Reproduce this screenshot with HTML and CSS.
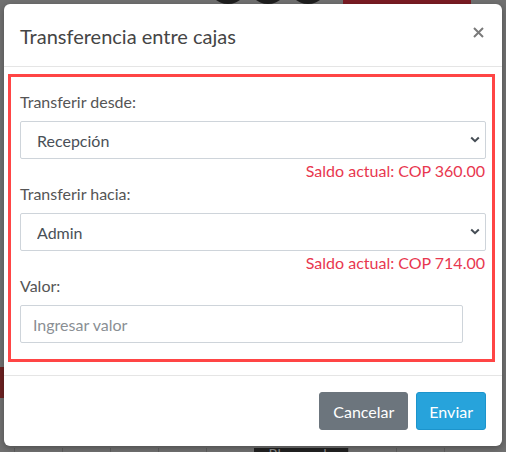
FILE: index.html
```html
<!DOCTYPE html>
<html lang="es">
<head>
    <meta charset="UTF-8">
    <meta name="viewport" content="width=device-width, initial-scale=1.0">
    <title>Transferencia entre cajas</title>
    <link rel="stylesheet" href="styles.css">
</head>
<body>

<!-- Page behind the modal (dimmed) -->
<div class="page">
    <div class="topbar">
        <span class="avatar"></span>
        <span class="avatar"></span>
        <span class="avatar"></span>
        <span class="red-btn"></span>
    </div>
    <div class="side-block"></div>
    <div class="grid-row">
        <span class="cell"></span>
        <span class="cell"></span>
        <span class="cell"></span>
        <span class="cell"></span>
        <span class="cell"></span>
        <span class="cell locked">Bloqueada</span>
        <span class="cell"></span>
        <span class="cell"></span>
        <span class="cell"></span>
    </div>
</div>

<!-- Modal -->
<div class="modal">
    <div class="modal-header">
        <h2 class="modal-title">Transferencia entre cajas</h2>
        <button class="close-btn" aria-label="Cerrar">
            <svg width="11" height="11" viewBox="0 0 11 11">
                <path d="M1 1 L10 10 M10 1 L1 10" stroke="#7a7a7a" stroke-width="2" fill="none"/>
            </svg>
        </button>
    </div>

    <div class="modal-body">
        <form class="transfer-form">
            <label class="field-label" for="desde">Transferir desde:</label>
            <div class="select-wrap">
                <select id="desde" class="field">
                    <option>Recepción</option>
                    <option>Admin</option>
                </select>
                <svg class="chevron" width="10" height="7" viewBox="0 0 10 7">
                    <path d="M1.2 1.5 L5 5.2 L8.8 1.5" stroke="#454d55" stroke-width="2" fill="none"/>
                </svg>
            </div>
            <div class="saldo">Saldo actual: COP 360.00</div>

            <label class="field-label label-gap" for="hacia">Transferir hacia:</label>
            <div class="select-wrap">
                <select id="hacia" class="field">
                    <option>Admin</option>
                    <option>Recepción</option>
                </select>
                <svg class="chevron" width="10" height="7" viewBox="0 0 10 7">
                    <path d="M1.2 1.5 L5 5.2 L8.8 1.5" stroke="#454d55" stroke-width="2" fill="none"/>
                </svg>
            </div>
            <div class="saldo">Saldo actual: COP 714.00</div>

            <label class="field-label label-gap" for="valor">Valor:</label>
            <input type="text" id="valor" class="field field-input" placeholder="Ingresar valor">
        </form>
    </div>

    <div class="modal-footer">
        <button class="btn btn-cancel">Cancelar</button>
        <button class="btn btn-send">Enviar</button>
    </div>
</div>

</body>
</html>
```

FILE: styles.css
```css
/* Page and dimmed background */
html, body {
    height: 100%;
}

body {
    margin: 0;
    background-color: #707070;
    font-family: Lato, "Noto Sans", sans-serif;
    overflow: hidden;
}

.page {
    height: 100%;
    display: flex;
    flex-direction: column;
}

.topbar {
    height: 4px;
    overflow: hidden;
    display: flex;
    align-items: flex-end;
    padding-left: 208px;
}

.avatar {
    width: 40px;
    height: 40px;
    border-radius: 50%;
    background-color: #1e1e1e;
    flex: none;
}

.red-btn {
    width: 128px;
    height: 30px;
    background-color: #7a1b23;
    margin-left: 15px;
    flex: none;
}

.side-block {
    width: 4px;
    height: 31px;
    background-color: #6d2222;
    margin-top: 363px;
}

.grid-row {
    height: 4px;
    margin-top: auto;
    display: flex;
    align-items: flex-start;
    overflow: hidden;
    padding-left: 14px;
}

.cell {
    width: 47px;
    height: 20px;
    border-left: 1px solid #5e5e5e;
    flex: none;
}

.locked {
    width: 94px;
    background-color: #222;
    color: #8a8a8a;
    font-size: 14px;
    line-height: 12px;
    text-align: center;
    border-left: none;
}

/* Modal box */
.modal {
    position: absolute;
    top: 4px;
    left: 4px;
    width: 498px;
    background-color: #fff;
    border-radius: 6px;
    box-shadow: 0 2px 6px rgba(0, 0, 0, 0.3);
}

.modal-header {
    display: flex;
    justify-content: space-between;
    align-items: flex-start;
    padding: 20px 18px 18px 16px;
    border-bottom: 1px solid #e5e5e5;
}

.modal-title {
    margin: 0;
    font-size: 20px;
    font-weight: normal;
    line-height: 24px;
    color: #454545;
}

.close-btn {
    border: none;
    background: none;
    padding: 0;
    margin-top: 3px;
    cursor: pointer;
    display: flex;
}

.modal-body {
    padding: 7px 7px 13px 4px;
}

/* Form with red outline */
.transfer-form {
    border: 3px solid #ff4545;
    padding: 14px 6px 16px 9px;
    display: flex;
    flex-direction: column;
}

.field-label {
    font-size: 16px;
    line-height: 22px;
    color: #555;
    margin-bottom: 8px;
}

.label-gap {
    margin-top: 1px;
}

.select-wrap {
    position: relative;
}

.field {
    width: 100%;
    height: 38px;
    box-sizing: border-box;
    border: 1px solid #ced4da;
    border-radius: 2px;
    background-color: #fff;
    font-family: Lato, "Noto Sans", sans-serif;
    font-size: 16px;
    color: #495057;
    padding: 0 16px;
    appearance: none;
    -webkit-appearance: none;
    outline: none;
}

.chevron {
    position: absolute;
    right: 6px;
    top: 15px;
    pointer-events: none;
}

.field-input {
    width: 95%;
    padding: 0 12px;
}

.field-input::placeholder {
    color: #8a8f94;
}

.saldo {
    margin-top: 1px;
    font-size: 16px;
    line-height: 22px;
    text-align: right;
    color: #e8374f;
    padding-right: 1px;
}

/* Footer buttons */
.modal-footer {
    display: flex;
    justify-content: flex-end;
    gap: 8px;
    padding: 16px;
    border-top: 1px solid #e5e5e5;
}

.btn {
    height: 38px;
    padding: 0 13px;
    border: 1px solid transparent;
    border-radius: 3px;
    font-family: Lato, "Noto Sans", sans-serif;
    font-size: 16px;
    color: #fff;
    cursor: pointer;
}

.btn-cancel {
    background-color: #6c757d;
    border-color: #6c757d;
}

.btn-send {
    background-color: #27a3db;
    border-color: #1c94cc;
    padding: 0 12px;
}
```
